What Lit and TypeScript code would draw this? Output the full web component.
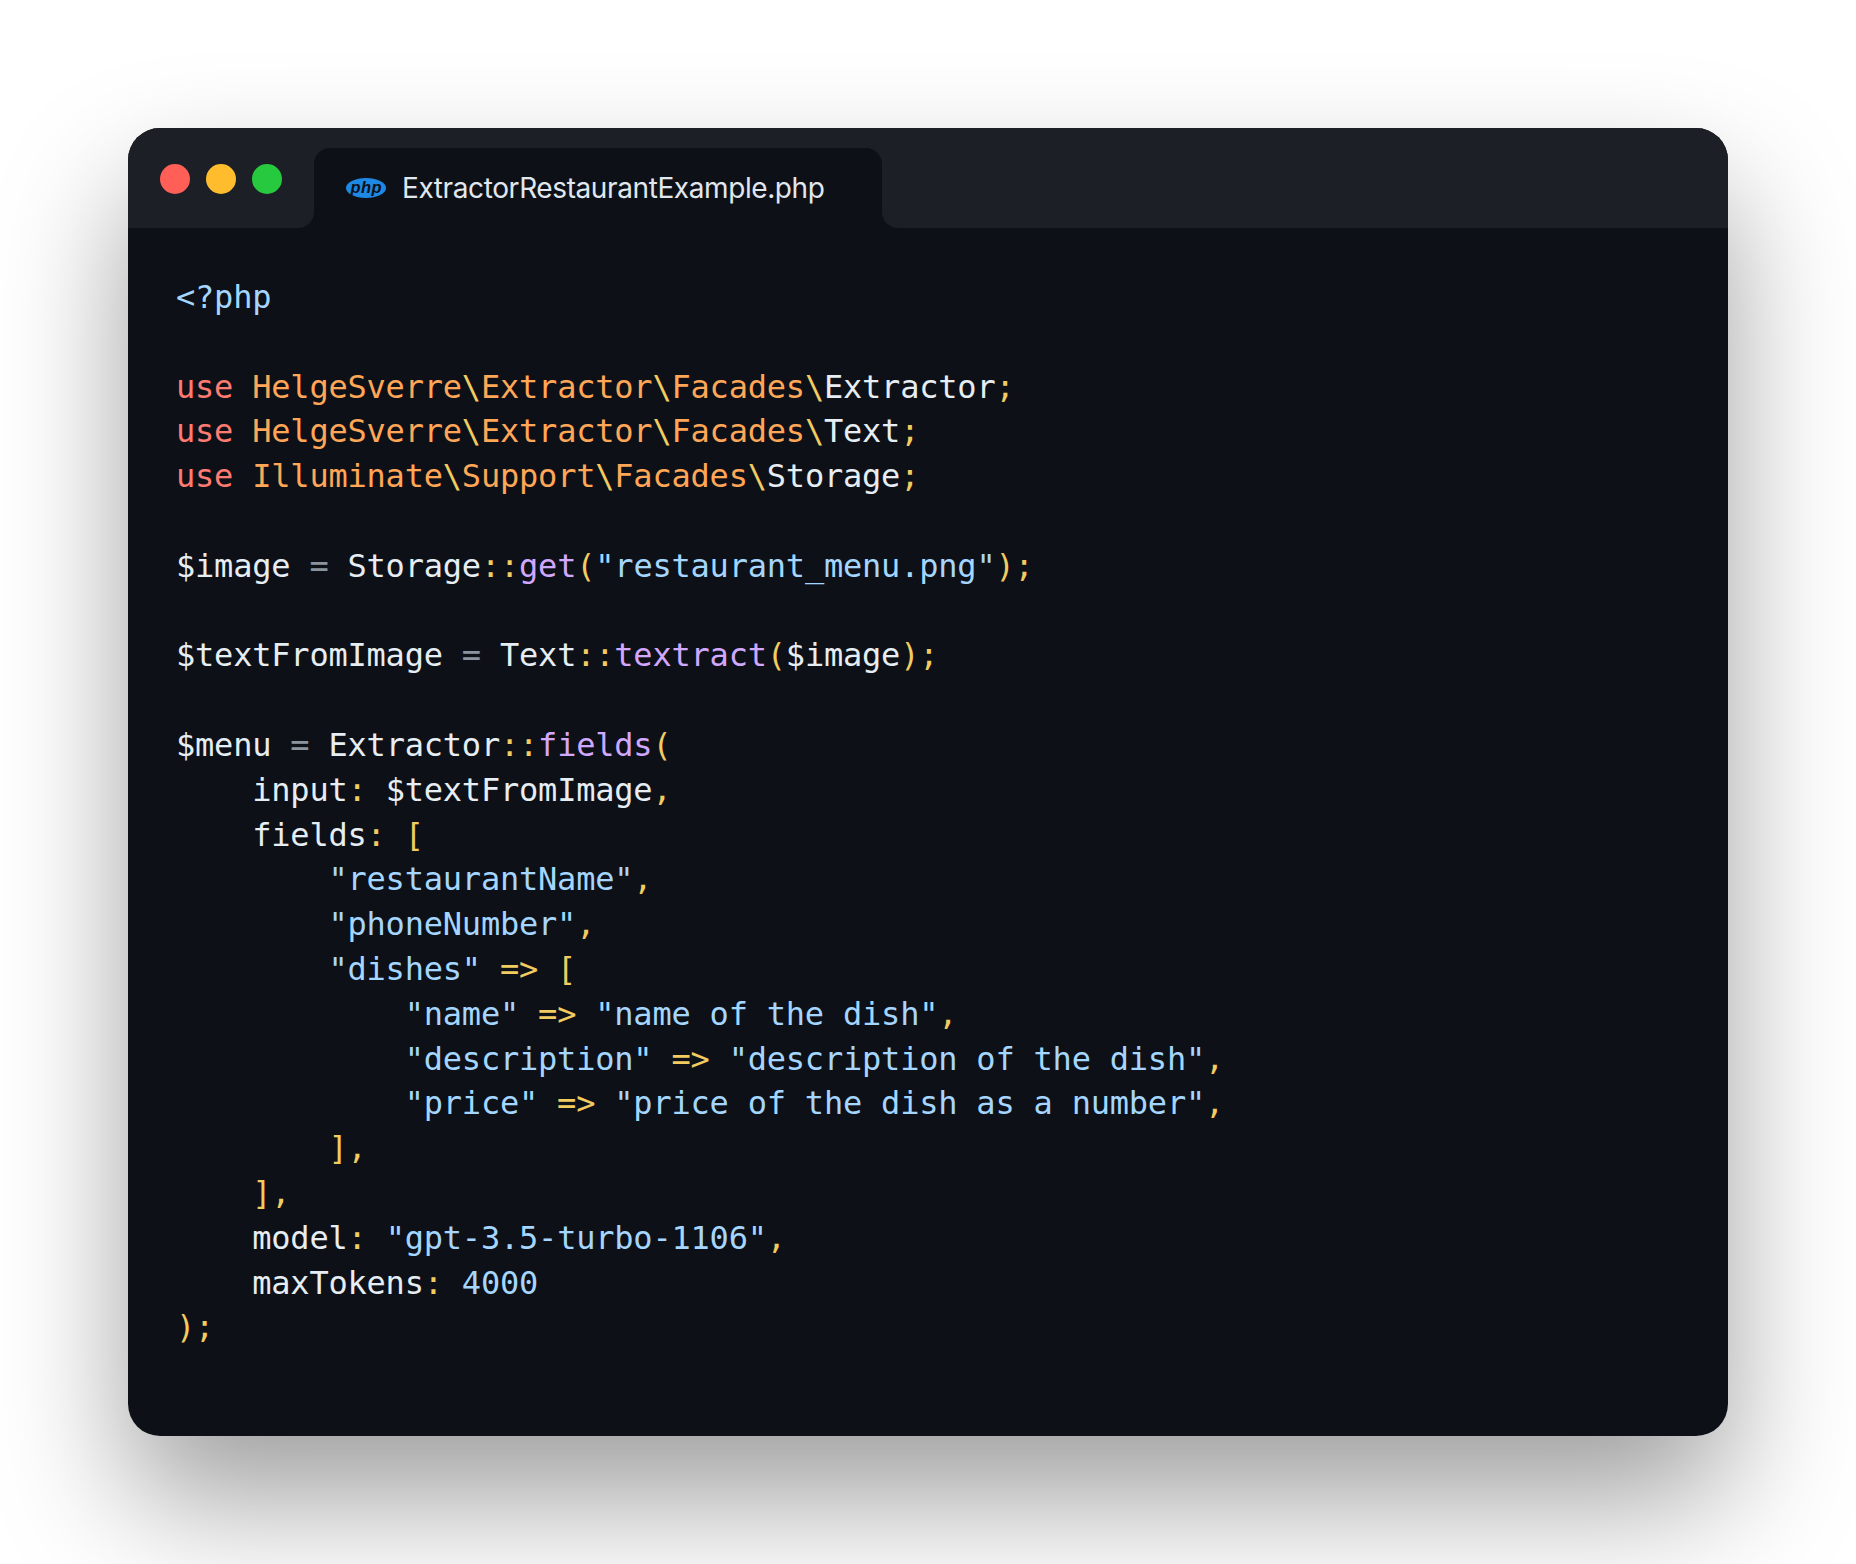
import { LitElement, html, css } from "lit";
import { customElement } from "lit/decorators.js";

type Tok = [string, string];
const W = "w", K = "k", C = "c", P = "p", F = "f", S = "s", G = "g", B = "b";
const ns = (s: string): Tok[] => {
  const out: Tok[] = [];
  s.split("\\").forEach((part, i, a) => {
    out.push([part, C]);
    if (i < a.length - 1) out.push(["\\", P]);
  });
  return out;
};
const LINES: Tok[][] = [
  [["<?php", B]],
  [],
  [["use ", K], ...ns("HelgeSverre\\Extractor\\Facades\\"), ["Extractor", W], [";", P]],
  [["use ", K], ...ns("HelgeSverre\\Extractor\\Facades\\"), ["Text", W], [";", P]],
  [["use ", K], ...ns("Illuminate\\Support\\Facades\\"), ["Storage", W], [";", P]],
  [],
  [["$image ", W], ["=", G], [" Storage", W], ["::", P], ["get", F], ["(", P], ['"restaurant_menu.png"', S], [");", P]],
  [],
  [["$textFromImage ", W], ["=", G], [" Text", W], ["::", P], ["textract", F], ["(", P], ["$image", W], [");", P]],
  [],
  [["$menu ", W], ["=", G], [" Extractor", W], ["::", P], ["fields", F], ["(", P]],
  [["    input", W], [":", P], [" $textFromImage", W], [",", P]],
  [["    fields", W], [": [", P]],
  [['        "restaurantName"', S], [",", P]],
  [['        "phoneNumber"', S], [",", P]],
  [['        "dishes"', S], [" => [", P]],
  [['            "name"', S], [" => ", P], ['"name of the dish"', S], [",", P]],
  [['            "description"', S], [" => ", P], ['"description of the dish"', S], [",", P]],
  [['            "price"', S], [" => ", P], ['"price of the dish as a number"', S], [",", P]],
  [["        ],", P]],
  [["    ],", P]],
  [["    model", W], [":", P], [' "gpt-3.5-turbo-1106"', S], [",", P]],
  [["    maxTokens", W], [":", P], [" ", W], ["4000", S]],
  [[");", P]],
];

@customElement("app-root")
export class AppRoot extends LitElement {
  static styles = css`
    :host { display: block; background: #fff; min-height: 1564px; padding: 128px; box-sizing: border-box; overflow: hidden; }
    .window {
      background: #0d1117; border-radius: 32px; overflow: hidden;
    }
    .shadowed { border-radius: 32px; box-shadow: 0 64px 128px rgba(0,0,0,.38); }
    .bar { display: flex; height: 100px; }
    .left {
      width: 186px; box-sizing: border-box; background: #1c1f26; border-bottom-right-radius: 16px;
      display: flex; gap: 16px; padding: 36px 0 0 32px;
    }
    .dot { width: 30px; height: 30px; border-radius: 50%; }
    .red { background: #ff5f56; } .yellow { background: #ffbd2e; } .green { background: #27c93f; }
    .tabwrap { width: 568px; background: #1c1f26; padding-top: 20px; box-sizing: border-box; display: flex; }
    .tab {
      flex: 1; background: #0d1117; border-radius: 16px 16px 0 0;
      display: flex; align-items: flex-start; gap: 16px; padding: 20px 0 0 32px;
      color: #e1e7ef; font: 400 28px/40px Inter, sans-serif; letter-spacing: -0.4px;
    }
    .php { width: 40px; height: 40px; flex: none; }
    .php text { font: italic 700 16.5px "Liberation Sans", sans-serif; letter-spacing: 0; fill: #0d1117; }
    .right { flex: 1; background: #1c1f26; border-bottom-left-radius: 16px; }
    .code {
      padding: 47px 48px 86px;
      font: 400 32px/44.8px "DejaVu Sans Mono", monospace;
      letter-spacing: -0.21px; white-space: pre; color: #e6edf3;
    }
    .line { height: 44.8px; }
    .w { color: #e6edf3; } .k { color: #ff7b72; } .c { color: #ffa657; }
    .p { color: #f2cc60; } .f { color: #d2a8ff; } .s { color: #a5d6ff; }
    .g { color: #8b949e; } .b { color: #a5d6ff; }
  `;
  render() {
    return html`<div class="shadowed"><div class="window">
      <div class="bar">
        <div class="left">
          <div class="dot red"></div><div class="dot yellow"></div><div class="dot green"></div>
        </div>
        <div class="tabwrap"><div class="tab">
          <svg class="php" viewBox="0 0 40 40"><ellipse cx="20" cy="20" rx="20" ry="10" fill="#1e88e5"></ellipse><text x="20" y="25" text-anchor="middle" textLength="31" lengthAdjust="spacing">php</text></svg>
          <span>ExtractorRestaurantExample.php</span>
        </div></div>
        <div class="right"></div>
      </div>
      <div class="code">${LINES.map(l => html`<div class="line">${l.map(([t, c]) => html`<span class=${c}>${t}</span>`)}</div>`)}</div>
    </div></div>`;
  }
}
